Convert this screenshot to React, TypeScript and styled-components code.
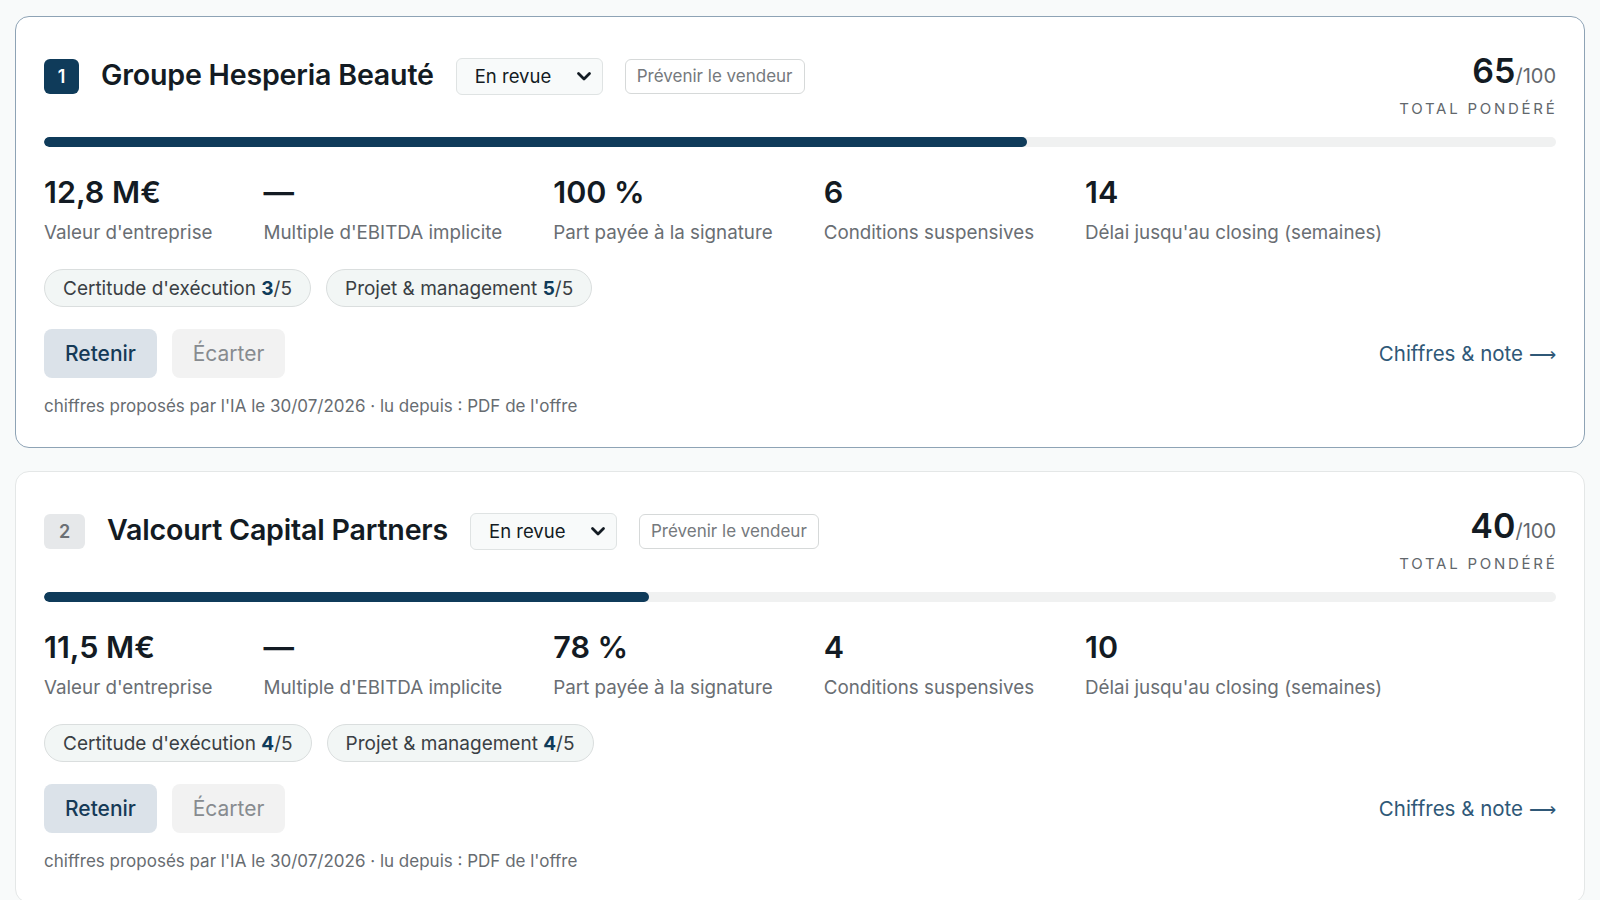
import React from "react";
import styled, { createGlobalStyle } from "styled-components";

const GlobalStyle = createGlobalStyle`
  html, body { margin: 0; padding: 0; }
  body {
    background: #f8fafa;
    font-family: Inter, "Noto Sans", "DejaVu Sans", sans-serif;
    color: #131b23;
  }
  * { box-sizing: border-box; }
`;

const Page = styled.div`
  display: flex;
  flex-direction: column;
  gap: 23px;
  padding: 16px 15px;
`;

const Card = styled.section<{ $selected: boolean }>`
  background: #ffffff;
  border: 1.5px solid ${(p) => (p.$selected ? "#8ea3b5" : "#e4e7e7")};
  border-radius: 14px;
  padding: 30px 28px 28px;
`;

const Header = styled.div`
  display: flex;
  justify-content: space-between;
  align-items: flex-start;
`;

const TitleGroup = styled.div`
  display: flex;
  align-items: center;
  gap: 22px;
  margin-top: 10px;
`;

const Badge = styled.span<{ $active: boolean }>`
  display: inline-flex;
  align-items: center;
  justify-content: center;
  height: 35px;
  min-width: ${(p) => (p.$active ? "35px" : "41px")};
  padding: 0 12px;
  border-radius: 6px;
  font-size: 18px;
  font-weight: 600;
  background: ${(p) => (p.$active ? "#0f3b5a" : "#e6e8ea")};
  color: ${(p) => (p.$active ? "#ffffff" : "#6b7075")};
`;

const Title = styled.h2`
  margin: 0 0 3px;
  font-size: 28.6px;
  font-weight: 600;
  color: #131b23;
  letter-spacing: -0.2px;
`;

const SelectBox = styled.div`
  display: inline-flex;
  align-items: center;
  justify-content: space-between;
  width: 147px;
  height: 37px;
  padding: 0 10px 0 18px;
  border: 1px solid #dfe3e3;
  border-radius: 6px;
  background: #f8fafa;
  font-size: 18.5px;
  color: #131b23;
`;

const GhostButton = styled.button`
  height: 35px;
  padding: 0 11px;
  border: 1px solid #d6d9d9;
  border-radius: 6px;
  background: #ffffff;
  font-family: inherit;
  font-size: 17px;
  color: #75797d;
`;

const ScoreBlock = styled.div`
  text-align: right;
  margin-top: 4px;
`;

const ScoreLine = styled.div`
  font-size: 34px;
  font-weight: 600;
  line-height: 1.2;
  color: #131b23;
`;

const ScoreMax = styled.span`
  font-size: 20px;
  font-weight: 400;
  color: #62676c;
`;

const ScoreLabel = styled.div`
  margin-top: 7px;
  margin-right: -1.5px;
  font-size: 15px;
  line-height: 1.3;
  letter-spacing: 2.75px;
  text-transform: uppercase;
  color: #62676c;
`;

const Track = styled.div`
  margin-top: 19px;
  height: 10px;
  border-radius: 5px;
  background: #f0f1f1;
  overflow: hidden;
`;

const Fill = styled.div`
  height: 100%;
  border-radius: 5px;
  background: #0f3b5a;
`;

const Metrics = styled.div`
  display: flex;
  gap: 51px;
  margin-top: 27px;
`;

const Metric = styled.div`
  display: flex;
  flex-direction: column;
`;

const MetricValue = styled.div`
  font-size: 30.5px;
  font-weight: 600;
  line-height: 1.2;
  color: #131b23;
`;

const MetricLabel = styled.div`
  margin-top: 9px;
  font-size: 18.8px;
  line-height: 1.4;
  color: #696e73;
`;

const Chips = styled.div`
  display: flex;
  gap: 15px;
  margin-top: 23px;
`;

const Chip = styled.span`
  display: inline-flex;
  align-items: center;
  height: 38px;
  padding: 0 18px;
  border-radius: 19px;
  border: 1px solid #dadede;
  background: #f2f6f5;
  font-size: 19px;
  color: #3a3f44;
  strong {
    color: #0f3b5a;
    font-weight: 700;
  }
`;

const Actions = styled.div`
  display: flex;
  justify-content: space-between;
  align-items: center;
  margin-top: 22px;
`;

const ButtonGroup = styled.div`
  display: flex;
  gap: 15px;
`;

const ActionButton = styled.button<{ $primary?: boolean }>`
  width: 113px;
  height: 49px;
  border: none;
  border-radius: 8px;
  font-family: inherit;
  font-size: 21px;
  font-weight: ${(p) => (p.$primary ? 500 : 400)};
  background: ${(p) => (p.$primary ? "#dbe2e9" : "#f2f2f2")};
  color: ${(p) => (p.$primary ? "#153a57" : "#878b8f")};
`;

const DetailLink = styled.a`
  font-size: 20.5px;
  color: #2f5877;
  text-decoration: none;
  display: inline-flex;
  align-items: center;
  gap: 6px;
`;

const Arrow = styled.span`
  font-family: "DejaVu Sans", sans-serif;
  font-size: 19px;
  font-weight: 300;
`;

const Footnote = styled.div`
  margin-top: 17px;
  font-size: 17px;
  line-height: 1.4;
  color: #676c71;
`;

type Offer = {
  rank: number;
  name: string;
  score: number;
  value: string;
  ebitda: string;
  upfront: string;
  conditions: string;
  weeks: string;
  certitude: number;
  projet: number;
  selected: boolean;
};

const offers: Offer[] = [
  {
    rank: 1,
    name: "Groupe Hesperia Beauté",
    score: 65,
    value: "12,8 M€",
    ebitda: "—",
    upfront: "100 %",
    conditions: "6",
    weeks: "14",
    certitude: 3,
    projet: 5,
    selected: true,
  },
  {
    rank: 2,
    name: "Valcourt Capital Partners",
    score: 40,
    value: "11,5 M€",
    ebitda: "—",
    upfront: "78 %",
    conditions: "4",
    weeks: "10",
    certitude: 4,
    projet: 4,
    selected: false,
  },
];

const Chevron = () => (
  <svg width="16" height="16" viewBox="0 0 16 16" fill="none">
    <path d="M2.5 5.5L8 11l5.5-5.5" stroke="#131b23" strokeWidth="2.8" strokeLinecap="round" strokeLinejoin="round" />
  </svg>
);

const OfferCard = ({ o }: { o: Offer }) => (
  <Card $selected={o.selected}>
    <Header>
      <TitleGroup>
        <Badge $active={o.rank === 1}>{o.rank}</Badge>
        <Title>{o.name}</Title>
        <SelectBox>
          <span>En revue</span>
          <Chevron />
        </SelectBox>
        <GhostButton>Prévenir le vendeur</GhostButton>
      </TitleGroup>
      <ScoreBlock>
        <ScoreLine>
          {o.score}
          <ScoreMax>/100</ScoreMax>
        </ScoreLine>
        <ScoreLabel>Total pondéré</ScoreLabel>
      </ScoreBlock>
    </Header>
    <Track>
      <Fill style={{ width: `${o.score}%` }} />
    </Track>
    <Metrics>
      <Metric>
        <MetricValue>{o.value}</MetricValue>
        <MetricLabel>Valeur d'entreprise</MetricLabel>
      </Metric>
      <Metric>
        <MetricValue>{o.ebitda}</MetricValue>
        <MetricLabel>Multiple d'EBITDA implicite</MetricLabel>
      </Metric>
      <Metric>
        <MetricValue>{o.upfront}</MetricValue>
        <MetricLabel>Part payée à la signature</MetricLabel>
      </Metric>
      <Metric>
        <MetricValue>{o.conditions}</MetricValue>
        <MetricLabel>Conditions suspensives</MetricLabel>
      </Metric>
      <Metric>
        <MetricValue>{o.weeks}</MetricValue>
        <MetricLabel>Délai jusqu'au closing (semaines)</MetricLabel>
      </Metric>
    </Metrics>
    <Chips>
      <Chip>
        Certitude d'exécution&nbsp;<strong>{o.certitude}</strong>/5
      </Chip>
      <Chip>
        Projet &amp; management&nbsp;<strong>{o.projet}</strong>/5
      </Chip>
    </Chips>
    <Actions>
      <ButtonGroup>
        <ActionButton $primary>Retenir</ActionButton>
        <ActionButton>Écarter</ActionButton>
      </ButtonGroup>
      <DetailLink href="#">
        Chiffres &amp; note <Arrow>⟶</Arrow>
      </DetailLink>
    </Actions>
    <Footnote>chiffres proposés par l'IA le 30/07/2026 · lu depuis : PDF de l'offre</Footnote>
  </Card>
);

export default function App() {
  return (
    <>
      <GlobalStyle />
      <Page>
        {offers.map((o) => (
          <OfferCard key={o.rank} o={o} />
        ))}
      </Page>
    </>
  );
}
